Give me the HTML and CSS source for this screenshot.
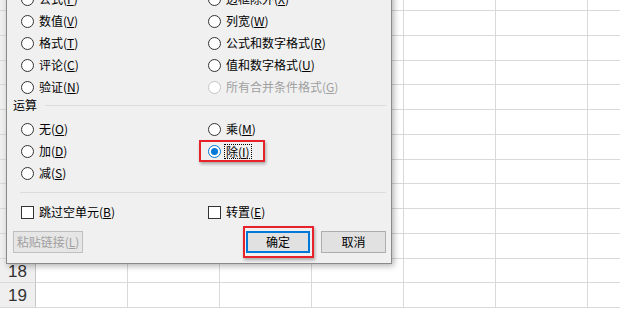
FILE: index.html
```html
<!DOCTYPE html>
<html lang="zh-CN">
<head>
    <meta charset="UTF-8">
    <title>选择性粘贴</title>
    <link rel="stylesheet" href="styles.css">
</head>
<body>
    <!-- 被对话框挡住的行号不写出来 -->
    <div class="sheet">
        <div class="row"><div class="head"></div><div class="cell"></div><div class="cell"></div><div class="cell"></div><div class="cell"></div><div class="cell"></div><div class="cell"></div><div class="cell"></div></div>
        <div class="row"><div class="head"></div><div class="cell"></div><div class="cell"></div><div class="cell"></div><div class="cell"></div><div class="cell"></div><div class="cell"></div><div class="cell"></div></div>
        <div class="row"><div class="head"></div><div class="cell"></div><div class="cell"></div><div class="cell"></div><div class="cell"></div><div class="cell"></div><div class="cell"></div><div class="cell"></div></div>
        <div class="row"><div class="head"></div><div class="cell"></div><div class="cell"></div><div class="cell"></div><div class="cell"></div><div class="cell"></div><div class="cell"></div><div class="cell"></div></div>
        <div class="row"><div class="head"></div><div class="cell"></div><div class="cell"></div><div class="cell"></div><div class="cell"></div><div class="cell"></div><div class="cell"></div><div class="cell"></div></div>
        <div class="row"><div class="head"></div><div class="cell"></div><div class="cell"></div><div class="cell"></div><div class="cell"></div><div class="cell"></div><div class="cell"></div><div class="cell"></div></div>
        <div class="row"><div class="head"></div><div class="cell"></div><div class="cell"></div><div class="cell"></div><div class="cell"></div><div class="cell"></div><div class="cell"></div><div class="cell"></div></div>
        <div class="row"><div class="head"></div><div class="cell"></div><div class="cell"></div><div class="cell"></div><div class="cell"></div><div class="cell"></div><div class="cell"></div><div class="cell"></div></div>
        <div class="row"><div class="head"></div><div class="cell"></div><div class="cell"></div><div class="cell"></div><div class="cell"></div><div class="cell"></div><div class="cell"></div><div class="cell"></div></div>
        <div class="row"><div class="head"></div><div class="cell"></div><div class="cell"></div><div class="cell"></div><div class="cell"></div><div class="cell"></div><div class="cell"></div><div class="cell"></div></div>
        <div class="row"><div class="head"></div><div class="cell"></div><div class="cell"></div><div class="cell"></div><div class="cell"></div><div class="cell"></div><div class="cell"></div><div class="cell"></div></div>
        <div class="row"><div class="head">18</div><div class="cell"></div><div class="cell"></div><div class="cell"></div><div class="cell"></div><div class="cell"></div><div class="cell"></div><div class="cell"></div></div>
        <div class="row"><div class="head">19</div><div class="cell"></div><div class="cell"></div><div class="cell"></div><div class="cell"></div><div class="cell"></div><div class="cell"></div><div class="cell"></div></div>
    </div>

    <div class="dialog">
        <!-- 粘贴 -->
        <div class="options">
            <div class="opt"><span class="radio"></span><span>公式(<u>F</u>)</span></div>
            <div class="opt"><span class="radio"></span><span>边框除外(<u>X</u>)</span></div>
            <div class="opt"><span class="radio"></span><span>数值(<u>V</u>)</span></div>
            <div class="opt"><span class="radio"></span><span>列宽(<u>W</u>)</span></div>
            <div class="opt"><span class="radio"></span><span>格式(<u>T</u>)</span></div>
            <div class="opt"><span class="radio"></span><span>公式和数字格式(<u>R</u>)</span></div>
            <div class="opt"><span class="radio"></span><span>评论(<u>C</u>)</span></div>
            <div class="opt"><span class="radio"></span><span>值和数字格式(<u>U</u>)</span></div>
            <div class="opt"><span class="radio"></span><span>验证(<u>N</u>)</span></div>
            <div class="opt disabled"><span class="radio"></span><span>所有合并条件格式(<u>G</u>)</span></div>
        </div>

        <!-- 运算 -->
        <div class="group-title"><span>运算</span><span class="rule"></span></div>
        <div class="options ops">
            <div class="opt"><span class="radio"></span><span>无(<u>O</u>)</span></div>
            <div class="opt"><span class="radio"></span><span>乘(<u>M</u>)</span></div>
            <div class="opt"><span class="radio"></span><span>加(<u>D</u>)</span></div>
            <div class="opt marked"><span class="radio checked"></span><span class="focus">除(<u>I</u>)</span><span class="red-box"></span></div>
            <div class="opt"><span class="radio"></span><span>减(<u>S</u>)</span></div>
        </div>

        <div class="sep"></div>

        <div class="options checks">
            <div class="opt"><span class="check"></span><span>跳过空单元(<u>B</u>)</span></div>
            <div class="opt"><span class="check"></span><span>转置(<u>E</u>)</span></div>
        </div>

        <div class="actions">
            <button class="btn" disabled>粘贴链接(<u>L</u>)</button>
            <span class="red-wrap"><button class="btn default">确定</button></span>
            <button class="btn">取消</button>
        </div>
    </div>
</body>
</html>
```

FILE: styles.css
```css
/* 页面 */
body {
    margin: 0;
    width: 620px; height: 309px;
    overflow: hidden;
    background: #fff;
    position: relative;
}

/* 表格背景 */
.sheet {
    margin-top: -13.75px;
}

.row {
    display: flex;
    height: 24.75px;
    box-sizing: border-box;
    border-bottom: 1px solid #d9d9d9;
}

.head {
    width: 36px;
    flex: none;
    box-sizing: border-box;
    background: #efefef;
    border-right: 1px solid #c6c6c6;
    font-family: "Liberation Sans", Arial, sans-serif;
    font-size: 17px;
    line-height: 26px;
    color: #333;
    text-align: center;
}

.cell {
    width: 92px;
    flex: none;
    box-sizing: border-box;
    border-right: 1px solid #d9d9d9;
}

.cell:first-of-type {
    width: 93px;
}

/* 最后一列只露出一部分 */
.cell:last-child {
    width: auto;
    flex: 1;
    min-width: 0;
    border-right: none;
}

/* 对话框 */
.dialog {
    position: absolute;
    left: 6px; top: -13px;
    width: 386px;
    box-sizing: border-box;
    background: #f0f0f0;
    border: 1px solid #8a8a8a;
    box-shadow: 2px 2px 6px rgba(0, 0, 0, 0.3);
    padding: 0 5px 5px 6px;
    font-family: "Noto Sans CJK SC", "Microsoft YaHei", sans-serif;
    font-size: 12px;
    color: #000;
}

.options {
    display: grid;
    grid-template-columns: 187px 1fr;
    padding-left: 8px;
}

.opt {
    display: flex;
    align-items: center;
    height: 22px;
    line-height: 16px;
    white-space: nowrap;
    position: relative;
}

.opt u {
    text-decoration-thickness: 1px;
    text-underline-offset: 1px;
}

.disabled {
    color: #a0a0a0;
}

/* 单选按钮 */
.radio {
    width: 13px; height: 13px;
    box-sizing: border-box;
    border: 1px solid #333;
    border-radius: 50%;
    background: #fff;
    margin-right: 5px;
    flex: none;
    display: flex;
    align-items: center;
    justify-content: center;
}

.disabled .radio {
    border-color: #c4c4c4;
}

.radio.checked {
    border-color: #0078d7;
}

.radio.checked::after {
    content: "";
    width: 7px; height: 7px;
    border-radius: 50%;
    background: #0078d7;
}

/* 除(I) 焦点虚线框 */
.focus {
    border: 1px dotted #000;
    padding: 0 1px;
    line-height: 13px;
    margin-left: -2px;
}

/* 红色标注框 */
.red-box {
    position: absolute;
    left: -9px; top: 0;
    width: 66px; height: 22px;
    box-sizing: border-box;
    border: 2px solid #e8222b;
    box-shadow: 1px 2px 3px rgba(0, 0, 0, 0.3);
}

/* 运算 标题 */
.group-title {
    display: flex;
    align-items: center;
    height: 16px;
    line-height: 16px;
    margin-top: -1px;
}

.rule {
    flex: 1;
    border-top: 1px solid #dcdcdc;
    margin-left: 8px;
}

.ops {
    margin-top: 5px;
}

.sep {
    border-top: 1px solid #dcdcdc;
    margin: 8px 0 0 7px;
}

.checks {
    margin-top: 8px;
}

/* 复选框 */
.check {
    width: 13px; height: 13px;
    box-sizing: border-box;
    border: 1px solid #333;
    background: #fff;
    margin-right: 5px;
    flex: none;
}

/* 按钮 */
.actions {
    display: flex;
    align-items: center;
    margin-top: 3px;
}

.btn {
    width: 65px; height: 22px;
    box-sizing: border-box;
    border: 1px solid #adadad;
    background: #e1e1e1;
    font-family: "Noto Sans CJK SC", "Microsoft YaHei", sans-serif;
    font-size: 12px;
    line-height: 16px;
    white-space: nowrap;
    color: #000;
    padding: 0;
}

.btn[disabled] {
    width: 70px;
    color: #a0a0a0;
    border-color: #bfbfbf;
    background: #e6e6e6;
}

.btn.default {
    width: 64px;
    border: 2px solid #0078d7;
}

.red-wrap {
    display: flex;
    margin-left: auto;
    margin-right: 7px;
    padding: 3px 2px 3px 1px;
    border: 2px solid #e8222b;
    box-shadow: 1px 2px 3px rgba(0, 0, 0, 0.3);
}
```
